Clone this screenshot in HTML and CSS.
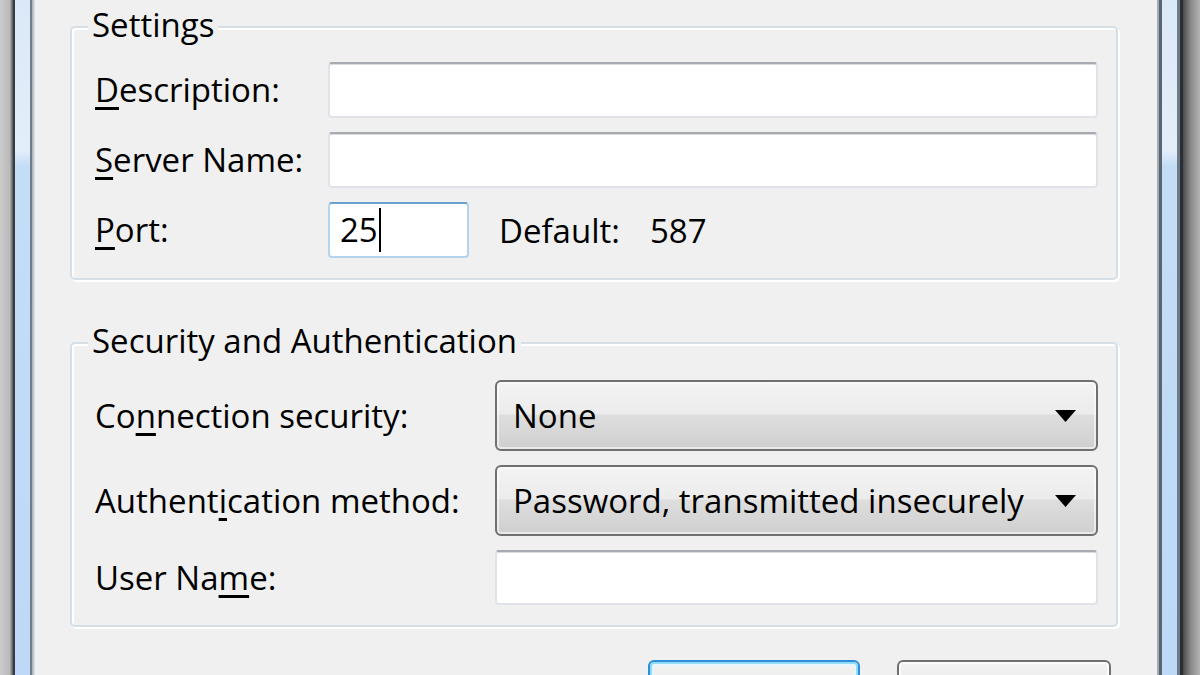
FILE: index.html
```html
<!DOCTYPE html>
<html lang="en">
<head>
<meta charset="utf-8">
<title>SMTP Server</title>
<link rel="stylesheet" href="styles.css">
</head>
<body>
<div class="window">
  <div class="frame frame-left"></div>
  <div class="client">
    <section class="group group-settings">
      <span class="group-title">Settings</span>
      <div class="rows rows-settings">
        <label class="label"><u>D</u>escription:</label>
        <div class="textbox"></div>
        <label class="label"><u>S</u>erver Name:</label>
        <div class="textbox"></div>
        <label class="label"><u>P</u>ort:</label>
        <div class="port-line">
          <div class="textbox textbox-port focused"><span class="value">25</span><span class="caret"></span></div>
          <span class="default-label">Default:</span>
          <span class="default-value">587</span>
        </div>
      </div>
    </section>
    <section class="group group-security">
      <span class="group-title">Security and Authentication</span>
      <div class="rows rows-security">
        <label class="label">Co<u>n</u>nection security:</label>
        <div class="dropdown"><span class="dropdown-text">None</span><svg class="arrow" width="21" height="12" viewBox="0 0 21 12"><polygon points="0,0 21,0 10.5,12" fill="#000"/></svg></div>
        <label class="label">Authent<u>i</u>cation method:</label>
        <div class="dropdown"><span class="dropdown-text">Password, transmitted insecurely</span><svg class="arrow" width="21" height="12" viewBox="0 0 21 12"><polygon points="0,0 21,0 10.5,12" fill="#000"/></svg></div>
        <label class="label">User Na<u>m</u>e:</label>
        <div class="textbox textbox-user"></div>
      </div>
    </section>
    <div class="buttons">
      <button class="btn btn-default" type="button"></button>
      <button class="btn" type="button"></button>
    </div>
  </div>
  <div class="frame frame-right"></div>
</div>
</body>
</html>
```

FILE: styles.css
```css
html, body {
  margin: 0;
  padding: 0;
  width: 1200px;
  height: 675px;
  overflow: hidden;
  background: #f0f0f0;
}

body {
  font-family: "Open Sans", "Noto Sans", "DejaVu Sans", sans-serif;
  font-size: 33px;
  color: #000;
}

.window {
  display: flex;
  height: 675px;
  overflow: hidden;
}

.frame {
  flex: none;
  height: 100%;
}

.frame-left {
  width: 35px;
  background:
    linear-gradient(to right,
      #cbcbcb 0, #b9b9b9 10px, #8f8f8f 11px, #5a5a5a 13px, #343b43 13px, #343b43 15px,
      transparent 15px, transparent 30px,
      #6f7c89 30px, #6f7c89 32px, #a9b1b9 32px, #c9ced3 34px, #f0f0f0 35px),
    linear-gradient(to bottom, #dbe8f7 0, #e4eefa 150px, #c4ddf7 166px, #bdd9f7 100%);
}

.frame-right {
  width: 43px;
  background:
    linear-gradient(to right,
      #a2acb6 0, #a2acb6 2px, #5a6570 2px, #5a6570 5px,
      transparent 5px, transparent 20px,
      #6d7a88 20px, #6d7a88 23px, #2a2f35 23px, #2a2f35 26px,
      #4a4a4a 26px, #8a8a8a 34px, #b4b4b4 43px),
    linear-gradient(to bottom, #dbe8f7 0, #e4eefa 150px, #c4ddf7 166px, #bdd9f7 100%);
}

.client {
  flex: 1;
  min-height: 0;
  overflow: hidden;
  padding: 26px 39px 0 35px;
  display: flex;
  flex-direction: column;
}

.group {
  flex: none;
  position: relative;
  border: 2px solid #d5dfe5;
  border-radius: 5px;
  box-shadow: inset 2px 2px 0 #fff, 2px 2px 0 #fff;
  padding: 34px 18px 20px 23px;
}

.group-security {
  margin-top: 62px;
  padding-top: 36px;
}

.group-title {
  position: absolute;
  top: -21px;
  left: 16px;
  padding: 0 4px;
  line-height: 36px;
  background: #f0f0f0;
  white-space: nowrap;
}

.rows {
  display: grid;
  row-gap: 14px;
  align-items: center;
}

.rows-settings {
  grid-template-columns: 233px 1fr;
  grid-auto-rows: 56px;
}

.rows-security {
  grid-template-columns: 400px 1fr;
  grid-template-rows: 71px 71px 55px;
}

.label {
  white-space: nowrap;
  line-height: 40px;
}

.label u {
  text-decoration-thickness: 3px;
  text-underline-offset: 5px;
}

.textbox {
  box-sizing: border-box;
  height: 100%;
  background: #fff;
  border: 2px solid #dfe3e9;
  border-top-color: #a7aab1;
  border-radius: 4px;
  box-shadow: inset 0 1px 0 #d9dbe0;
}

.port-line {
  display: flex;
  align-items: center;
  height: 100%;
}

.textbox-port {
  width: 141px;
  flex: none;
  display: flex;
  align-items: center;
  padding-left: 10px;
}

.textbox.focused {
  border-color: #b3d4ee;
  border-top-color: #6a9fd0;
  box-shadow: none;
}

.value {
  line-height: 40px;
}

.caret {
  width: 2px;
  height: 44px;
  background: #000;
  margin-left: 1px;
}

.default-label {
  margin-left: 30px;
}

.default-value {
  margin-left: 30px;
}

.dropdown {
  box-sizing: border-box;
  height: 100%;
  display: flex;
  align-items: center;
  justify-content: space-between;
  padding: 0 20px 0 16px;
  border: 2px solid #707070;
  border-radius: 6px;
  background: linear-gradient(to bottom, #f3f3f3 0%, #ececec 47%, #dedede 50%, #cfcfcf 100%);
  box-shadow: inset 0 0 0 2px rgba(255, 255, 255, 0.55);
}

.dropdown-text {
  white-space: nowrap;
  line-height: 40px;
}

.arrow {
  flex: none;
  display: block;
}

.buttons {
  flex: none;
  display: flex;
  justify-content: flex-end;
  gap: 37px;
  margin-top: 33px;
  padding-right: 7px;
}

.btn {
  flex: none;
  width: 214px;
  height: 62px;
  padding: 0;
  border: 2px solid #707070;
  border-radius: 6px;
  background: linear-gradient(to bottom, #f2f2f2 0%, #ebebeb 50%, #dddddd 50%, #cfcfcf 100%);
  box-shadow: inset 0 0 0 2px #fcfcfc;
  font: inherit;
}

.btn-default {
  width: 212px;
  border-color: #2c8fd6;
  box-shadow: inset 0 0 0 2px #8fdcfc, inset 0 0 0 4px #e8f7fd;
}
```
